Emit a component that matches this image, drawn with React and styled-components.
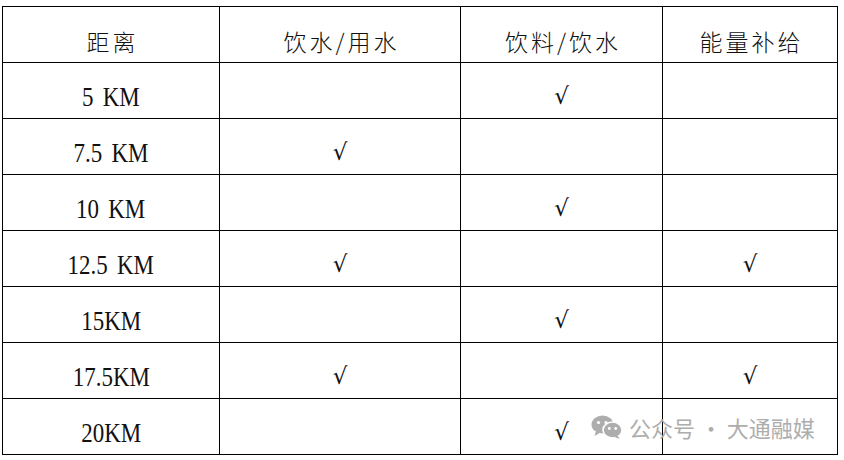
import React from 'react'
import styled, { createGlobalStyle } from 'styled-components'

const GlobalStyle = createGlobalStyle`
  html, body {
    margin: 0;
    padding: 0;
    background: #ffffff;
  }
`

const rows = [
  { dist: '5 KM', water: false, drink: true, energy: false },
  { dist: '7.5 KM', water: true, drink: false, energy: false },
  { dist: '10 KM', water: false, drink: true, energy: false },
  { dist: '12.5 KM', water: true, drink: false, energy: true },
  { dist: '15KM', water: false, drink: true, energy: false },
  { dist: '17.5KM', water: true, drink: false, energy: true },
  { dist: '20KM', water: false, drink: true, energy: false },
]

const headers = ['距离', '饮水/用水', '饮料/饮水', '能量补给']

const WeChatIcon = () => (
  <svg width="32" height="24" viewBox="0 0 32 24">
    <ellipse cx="11.5" cy="9.5" rx="11" ry="9" fill="#a9a9a9" />
    <path d="M5 16 L3.5 21 L9.5 17.5 Z" fill="#a9a9a9" />
    <circle cx="7.5" cy="7.5" r="1.6" fill="#fff" />
    <circle cx="15" cy="7.5" r="1.6" fill="#fff" />
    <ellipse cx="21.5" cy="15" rx="9.5" ry="8" fill="#a9a9a9" stroke="#fff" strokeWidth="1.6" />
    <path d="M26.5 20.5 L28.5 24 L23 21.8 Z" fill="#a9a9a9" />
    <circle cx="18.3" cy="13.5" r="1.4" fill="#fff" />
    <circle cx="24.7" cy="13.5" r="1.4" fill="#fff" />
  </svg>
)

const App = () => {
  return (
    <>
      <GlobalStyle />
      <Page>
        <Table>
          {headers.map((h) => (
            <HeadCell key={h}>{h}</HeadCell>
          ))}
          {rows.map((r) => (
            <React.Fragment key={r.dist}>
              <DistCell>
                <DistText>{r.dist}</DistText>
              </DistCell>
              <MarkCell>{r.water ? '√' : ''}</MarkCell>
              <MarkCell>{r.drink ? '√' : ''}</MarkCell>
              <MarkCell>{r.energy ? '√' : ''}</MarkCell>
            </React.Fragment>
          ))}
        </Table>
        <Watermark>
          <WeChatIcon />
          <span>公众号 · 大通融媒</span>
        </Watermark>
      </Page>
    </>
  )
}

export default App

const Page = styled.div`
  position: relative;
  width: 844px;
  height: 460px;
  padding: 6px 0 0 2px;
  box-sizing: border-box;
`

const Table = styled.div`
  display: grid;
  grid-template-columns: 217px 241px 202px 175px;
  grid-auto-rows: 56px;
  width: 836px;
  box-sizing: border-box;
  border-left: 1px solid #000;
  border-top: 1px solid #000;
`

const Cell = styled.div`
  display: flex;
  align-items: center;
  justify-content: center;
  box-sizing: border-box;
  border-right: 1px solid #000;
  border-bottom: 1px solid #000;
  padding-top: 12px;
  color: #111;
`

const HeadCell = styled(Cell)`
  font-family: 'Noto Sans CJK SC', 'Liberation Serif', serif;
  font-size: 23px;
  font-weight: 300;
  letter-spacing: 3px;
  padding-left: 3px;
`

const DistCell = styled(Cell)`
  font-family: 'Liberation Serif', 'Noto Sans CJK SC', serif;
  font-size: 27px;
  padding-top: 13px;
`

const DistText = styled.span`
  display: inline-block;
  white-space: pre;
  word-spacing: 4px;
  transform: scaleX(0.85);
`

const MarkCell = styled(Cell)`
  font-family: 'DejaVu Sans', sans-serif;
  font-size: 23px;
  padding-top: 11px;
`

const Watermark = styled.div`
  position: absolute;
  left: 591px;
  top: 411px;
  display: flex;
  align-items: center;
  gap: 6px;
  font-family: 'Noto Sans CJK SC', sans-serif;
  font-size: 22px;
  color: #a9a9a9;
  opacity: 0.95;
  white-space: nowrap;
`
